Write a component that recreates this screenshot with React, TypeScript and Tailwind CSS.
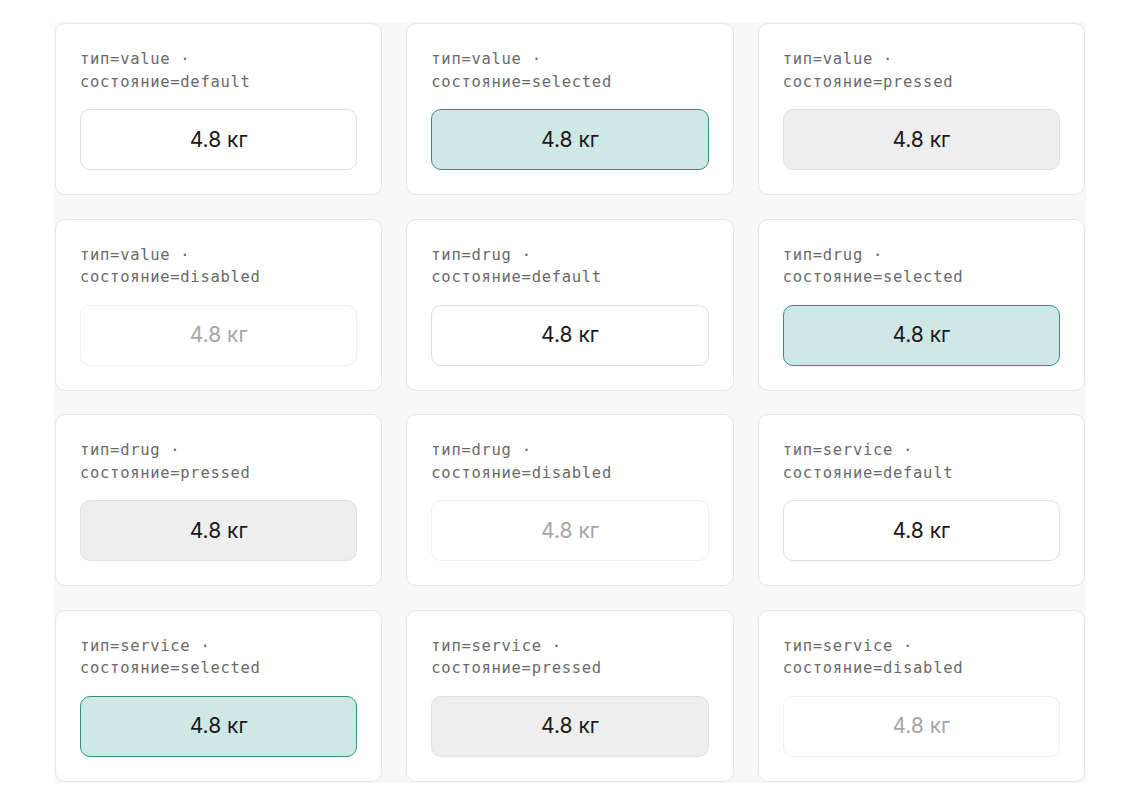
import React from "react";

type State = "default" | "selected" | "pressed" | "disabled";

const items: { t: string; s: State }[] = [
  { t: "value", s: "default" },
  { t: "value", s: "selected" },
  { t: "value", s: "pressed" },
  { t: "value", s: "disabled" },
  { t: "drug", s: "default" },
  { t: "drug", s: "selected" },
  { t: "drug", s: "pressed" },
  { t: "drug", s: "disabled" },
  { t: "service", s: "default" },
  { t: "service", s: "selected" },
  { t: "service", s: "pressed" },
  { t: "service", s: "disabled" },
];

const btnCls: Record<State, string> = {
  default: "bg-white border-[#dedede] text-[#1a1a1a]",
  selected: "bg-[#cfe8e6] border-[#3a8d84] text-[#1a1a1a]",
  pressed: "bg-[#edeeed] border-[#e0e1e0] text-[#1a1a1a]",
  disabled: "bg-white border-[#f0f0f0] text-[#a6a6a6]",
};

export default function App() {
  return (
    <div className="w-[1140px] h-[804px] bg-white pt-[22px] pl-[54px]">
      <div className="w-[1032px] bg-[#f8f8f8] p-[1px] grid grid-cols-3 gap-x-[24px] gap-y-[23.5px]">
        {items.map((it, i) => (
          <div
            key={i}
            className="bg-white border border-[#e6e6e6] rounded-[10px] px-[24px] pt-[24px] pb-[24px] flex flex-col gap-[16px]"
          >
            <div
              className="text-[15.5px] leading-[22.5px] text-[#6a6a6a] tracking-[0.7px]"
              style={{ fontFamily: '"DejaVu Sans Mono", "Liberation Mono", monospace' }}
            >
              <div>тип={it.t} ·</div>
              <div>состояние={it.s}</div>
            </div>
            <div
              className={`h-[61px] rounded-[10px] border flex items-center justify-center text-[21px] ${btnCls[it.s]}`}
              style={{ fontFamily: 'Inter, "Noto Sans", sans-serif' }}
            >
              4.8 кг
            </div>
          </div>
        ))}
      </div>
    </div>
  );
}
